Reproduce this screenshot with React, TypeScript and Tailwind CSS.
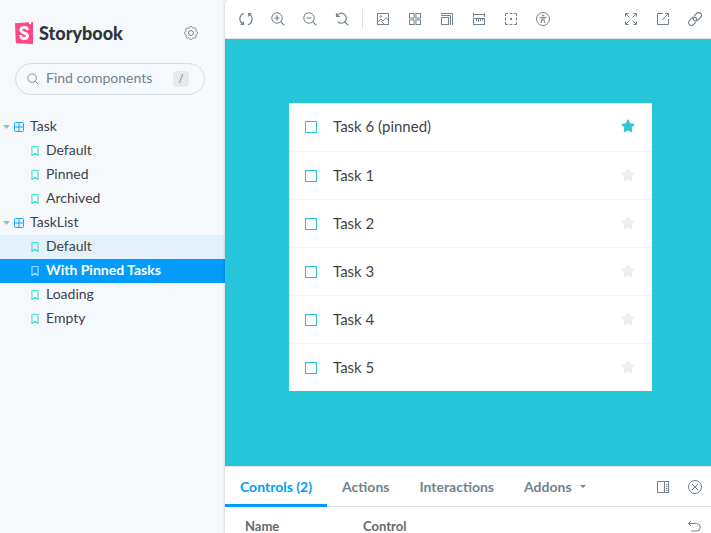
import React from "react";

type IconProps = { children: React.ReactNode; className?: string };

function Icon({ children, className = "size-3.5" }: IconProps) {
  return (
    <svg viewBox="0 0 14 14" className={className} fill="none" stroke="currentColor" strokeWidth="1" aria-hidden="true">
      {children}
    </svg>
  );
}

const icons = {
  sync: (
    <>
      <path d="M5 1.2A6 6 0 0 0 3 11.500M9 12.800A6 6 0 0 0 11 2.500" strokeWidth="1.200" />
      <path d="M1 13h4V9zM13 1H9v4z" fill="currentColor" stroke="none" />
    </>
  ),
  zoomIn: (
    <>
      <circle cx="6" cy="6" r="5.2" />
      <path d="M9.600 9.600l3.800 3.800" strokeWidth="1.200" />
      <path d="M3.500 6h5M6 3.500v5" strokeWidth="1.200" />
    </>
  ),
  zoomOut: (
    <>
      <circle cx="6" cy="6" r="5.2" />
      <path d="M9.600 9.600l3.800 3.800M3.500 6h5" strokeWidth="1.200" />
    </>
  ),
  zoomReset: (
    <>
      <path d="M1.500 1v3.500H5M1.700 4.300A5 5 0 1 1 2.600 9.600M9.600 9.600l3.800 3.800" strokeWidth="1.200" />
      <path d="M1 1v4h4z" fill="currentColor" stroke="none" />
    </>
  ),
  photo: (
    <>
      <rect x="1.5" y="1.5" width="11" height="11" />
      <path d="M2 10l3-3 2 2 3.2-3.200L12.500 8M5 9l3 3" />
      <circle cx="4.800" cy="4.500" r=".8" />
    </>
  ),
  grid: (
    <>
      <rect x="1.5" y="1.5" width="4.600" height="4.600" />
      <rect x="7.900" y="1.5" width="4.600" height="4.600" />
      <rect x="1.5" y="7.900" width="4.600" height="4.600" />
      <rect x="7.900" y="7.900" width="4.600" height="4.600" />
    </>
  ),
  viewport: (
    <>
      <rect x="1.5" y="5.5" width="7" height="7" />
      <path d="M1 3.500h9.500V13M1 1.500h11.500V13" />
    </>
  ),
  ruler: (
    <>
      <path d="M1.500 1v4M12.500 1v4M2 2.500h10M4.500 7v2M6.500 7v3M8.500 7v2M10.500 7v1.500" />
      <rect x="1.5" y="6.5" width="11" height="6" />
    </>
  ),
  outline: (
    <>
      <path d="M1.500 4V1.500H4M10 1.500h2.500V4M12.500 10v2.500H10M4 12.500H1.500V10M5.500 1.500h3M5.500 12.500h3M1.500 5.500v3M12.500 5.500v3" />
      <rect x="6" y="6" width="2" height="2" fill="currentColor" stroke="none" />
    </>
  ),
  accessibility: (
    <>
      <circle cx="7" cy="7" r="6.5" />
      <circle cx="7" cy="3.400" r="1" fill="currentColor" stroke="none" />
      <path d="M3.500 5.200l2.500.6h2l2.500-.6M6 5.800v2.400L4.900 11M8 5.800v2.400L9.100 11M6.100 8.200h1.800" />
    </>
  ),
  expand: (
    <>
      <path d="M1.500 4.500v-3h3M9.500 1.500h3v3M12.500 9.500v3h-3M4.500 12.500h-3v-3" />
      <path d="M1.500 1.500l4 4M12.500 1.500l-4 4M12.500 12.500l-4-4M1.500 12.500l4-4" />
    </>
  ),
  share: <path d="M7 1.500H1.500v11h11V7M9 1.500h3.500V5M12.500 1.500L6 8" />,
  link: (
    <>
      <path d="M6.200 3.800L8.600 1.400a2.800 2.800 0 0 1 4 4L9.900 8.100a2.800 2.800 0 0 1-4 0 2.600 2.600 0 0 1-.5-2.600" strokeWidth="1.200" />
      <path d="M7.800 10.200l-2.400 2.400a2.800 2.800 0 0 1-4-4l2.700-2.700a2.800 2.800 0 0 1 4 0 2.600 2.600 0 0 1 .5 2.600" strokeWidth="1.200" />
    </>
  ),
  sidebarRight: (
    <>
      <rect x="1.5" y="1.5" width="11" height="11" />
      <path d="M8.500 1.500v11M10 4.500h1.500M10 6.500h1.500M10 8.500h1.500M10 10.500h1.500" />
    </>
  ),
  close: (
    <>
      <circle cx="7" cy="7" r="6.5" />
      <path d="M4 4l6 6M10 4l-6 6" />
    </>
  ),
  undo: <path d="M4 1L1.500 3.500 4 6M1.500 3.500h8a3.600 3.600 0 0 1 0 7.500H4" />,
  search: (
    <>
      <circle cx="6" cy="6" r="5" />
      <path d="M9.600 9.600l3.800 3.800" />
    </>
  ),
};

const gearPath =
  Array.from({ length: 96 }, (_, i) => {
    const angle = (i / 96) * Math.PI * 2;
    const radius = 6 + 0.6 * Math.tanh(2.2 * Math.cos(angle * 8));
    const x = 7 + radius * Math.cos(angle);
    const y = 7 + radius * Math.sin(angle);
    return `${i ? "L" : "M"}${x.toFixed(2)} ${y.toFixed(2)}`;
  }).join("") + "Z";

function IconButton({ label, icon }: { label: string; icon: React.ReactNode }) {
  return (
    <button type="button" aria-label={label} className="flex size-7 shrink-0 items-center justify-center text-[#73828c]">
      <Icon>{icon}</Icon>
    </button>
  );
}

function Logo() {
  return (
    <a href="#home" className="flex items-center gap-1.5 text-[#2e3438]">
      <svg viewBox="0 0 18 22" className="h-[22px] w-[18px]" aria-hidden="true">
        <path d="M0 1.3L17.4 0q.6 0 .6.7v20.600q0 .7-.7.700L1.500 21.300q-.7 0-.7-.7z" fill="#ff4785" />
        <path d="M14.100 0l2.100-.1.100 2.700-1.100-.8-1.200.700z" fill="#fff" />
        <path
          d="M12.200 8.100C12.400 6 11.300 5.400 9.300 5.400 7.200 5.400 5.900 6.300 5.900 7.900c0 3.800 6.600 2.500 6.600 5.900 0 1.800-1.300 2.700-3.300 2.700-2.400 0-3.600-1-3.400-3.300"
          fill="none"
          stroke="#fff"
          strokeWidth="2.900"
        />
      </svg>
      <span className="text-lg leading-6 font-black">Storybook</span>
    </a>
  );
}

function Group({ name, children }: { name: string; children: React.ReactNode }) {
  return (
    <li>
      <button type="button" aria-expanded="true" className="flex h-6 w-full items-center pl-[3px] text-left">
        <svg viewBox="0 0 7 4" className="h-1 w-[7px] text-[#a9b3ba]" aria-hidden="true">
          <path d="M0 0h7L3.500 4z" fill="currentColor" />
        </svg>
        <svg viewBox="0 0 10 10" className="mr-1.5 ml-1 size-2.5 text-[#1ea7fd]" fill="none" stroke="currentColor" aria-hidden="true">
          <rect x=".5" y=".5" width="9" height="9" rx="1.200" fill="#dff1fe" />
          <path d="M5 .5v9M.5 5h9" />
        </svg>
        <span className="pb-0.5">{name}</span>
      </button>
      <ul>{children}</ul>
    </li>
  );
}

function Story({ name, state = "idle" }: { name: string; state?: "idle" | "hover" | "selected" }) {
  const look = {
    idle: "",
    hover: "bg-[#e3f1fb]",
    selected: "bg-[#029cfd] font-bold text-white",
  }[state];
  return (
    <li>
      <a href="#story" className={`flex h-6 items-center gap-[7px] pl-[31px] ${look}`}>
        <svg
          viewBox="0 0 8 10"
          className={`h-2.5 w-2 ${state === "selected" ? "text-[#9bd7fe]" : "text-[#4fdcd4]"}`}
          fill="none"
          stroke="currentColor"
          strokeWidth="1.200"
          aria-hidden="true"
        >
          <path d="M1 .5h6v9L4 7.300 1 9.500z" />
        </svg>
        <span className="pb-0.5">{name}</span>
      </a>
    </li>
  );
}

function Sidebar() {
  return (
    <nav className="w-[225px] shrink-0 text-sm text-[#3c4246]">
      <div className="flex items-center justify-between pt-[19px] pr-5 pl-[15px]">
        <Logo />
        <button type="button" aria-label="Settings" className="flex size-7 items-center justify-center text-[#73828c]">
          <Icon>
            <path d={gearPath} />
            <circle cx="7" cy="7" r="2.500" />
          </Icon>
        </button>
      </div>
      <label className="mt-4 mr-5 ml-[15px] flex h-8 items-center rounded-full border border-[#d5dee5] pr-[15px] pl-[11px] text-[#73828c]">
        <Icon className="mr-[7px] size-3 shrink-0">{icons.search}</Icon>
        <input
          type="text"
          aria-label="Find components"
          placeholder="Find components"
          className="min-w-0 flex-1 bg-transparent pb-0.5 outline-none placeholder:text-[#73828c]"
        />
        <kbd className="flex size-4 items-center justify-center rounded-sm bg-[#e6eaed] font-[Lato] text-[11px]">/</kbd>
      </label>
      <ul className="mt-5">
        <Group name="Task">
          <Story name="Default" />
          <Story name="Pinned" />
          <Story name="Archived" />
        </Group>
        <Group name="TaskList">
          <Story name="Default" state="hover" />
          <Story name="With Pinned Tasks" state="selected" />
          <Story name="Loading" />
          <Story name="Empty" />
        </Group>
      </ul>
    </nav>
  );
}

function Toolbar() {
  return (
    <div className="flex h-[39px] shrink-0 items-center justify-between border-b border-[#dfe5e9] pr-0.5 pl-[7px]">
      <div className="flex items-center gap-1">
        <IconButton label="Remount component" icon={icons.sync} />
        <IconButton label="Zoom in" icon={icons.zoomIn} />
        <IconButton label="Zoom out" icon={icons.zoomOut} />
        <IconButton label="Reset zoom" icon={icons.zoomReset} />
        <span className="mx-0.5 h-5 w-px bg-[#dfe4e7]" />
        <IconButton label="Change background" icon={icons.photo} />
        <IconButton label="Apply grid" icon={icons.grid} />
        <IconButton label="Change viewport" icon={icons.viewport} />
        <IconButton label="Enable measure" icon={icons.ruler} />
        <IconButton label="Apply outlines" icon={icons.outline} />
        <IconButton label="Vision simulator" icon={icons.accessibility} />
      </div>
      <div className="flex items-center gap-1">
        <IconButton label="Go full screen" icon={icons.expand} />
        <IconButton label="Open canvas in new tab" icon={icons.share} />
        <IconButton label="Copy canvas link" icon={icons.link} />
      </div>
    </div>
  );
}

const tasks = ["Task 6 (pinned)", "Task 1", "Task 2", "Task 3", "Task 4", "Task 5"];

function TaskRow({ title, pinned }: { title: string; pinned: boolean }) {
  return (
    <li className="flex h-12 items-center border-t border-[#eaf8fb] px-4 first:border-t-0">
      <label className="flex flex-1 items-center gap-4 text-[15px] text-[#444]">
        <input type="checkbox" className="size-3 shrink-0 appearance-none border border-[#26c6da]" />
        <span className="pb-px">{title}</span>
      </label>
      <button type="button" aria-label="Pin task" className={pinned ? "text-[#2cc5d2]" : "text-[#eee]"}>
        <svg viewBox="0 0 16 16" className="mb-0.5 size-4" aria-hidden="true">
          <path
            d="M8 1.800l1.900 4 4.400.6-3.200 3.100.8 4.400L8 11.900l-3.900 2 .8-4.400L1.700 6.400l4.400-.6z"
            fill="currentColor"
            stroke="currentColor"
            strokeLinejoin="round"
          />
        </svg>
      </button>
    </li>
  );
}

function AddonPanel() {
  return (
    <section className="h-[67px] shrink-0 overflow-hidden border-t border-[#dfe5e9] font-bold text-[#73828c]">
      <div className="flex h-10 items-stretch justify-between border-b border-[#dfe2e4] pr-0.5 text-sm">
        <div role="tablist" className="flex">
          <button type="button" role="tab" aria-selected="true" className="-mb-px border-b-3 border-[#029cfd] px-[15px] pt-0.5 text-[#029cfd]">
            Controls (2)
          </button>
          <button type="button" role="tab" className="px-[15px]">
            Actions
          </button>
          <button type="button" role="tab" className="px-[15px]">
            Interactions
          </button>
          <button type="button" className="flex items-center gap-2 px-[15px]">
            Addons
            <svg viewBox="0 0 6 3" className="h-[3px] w-1.5" aria-hidden="true">
              <path d="M0 0h6L3 3z" fill="currentColor" />
            </svg>
          </button>
        </div>
        <div className="flex items-center gap-1">
          <IconButton label="Change addon orientation" icon={icons.sidebarRight} />
          <IconButton label="Hide addons" icon={icons.close} />
        </div>
      </div>
      <table className="w-full text-left text-[13px] text-[#65696d]">
        <thead>
          <tr className="h-10">
            <th className="w-[123px] pl-5">Name</th>
            <th className="pl-[15px]">Control</th>
            <th className="w-[31px]">
              <IconButton label="Reset controls" icon={icons.undo} />
            </th>
          </tr>
        </thead>
      </table>
    </section>
  );
}

export default function App() {
  return (
    <div className="flex h-screen overflow-hidden bg-[#f6f9fc] font-[Lato,'Open_Sans',sans-serif]">
      <Sidebar />
      <main className="flex min-w-0 flex-1 flex-col overflow-hidden rounded-tl bg-white shadow-[0_0_3px_rgba(0,0,0,0.25)]">
        <Toolbar />
        <div className="min-h-0 flex-1 overflow-hidden bg-[#26c6da] pt-16 pr-[59px] pl-16">
          <ul className="bg-white">
            {tasks.map((title, index) => (
              <TaskRow key={title} title={title} pinned={index === 0} />
            ))}
          </ul>
        </div>
        <AddonPanel />
      </main>
    </div>
  );
}
